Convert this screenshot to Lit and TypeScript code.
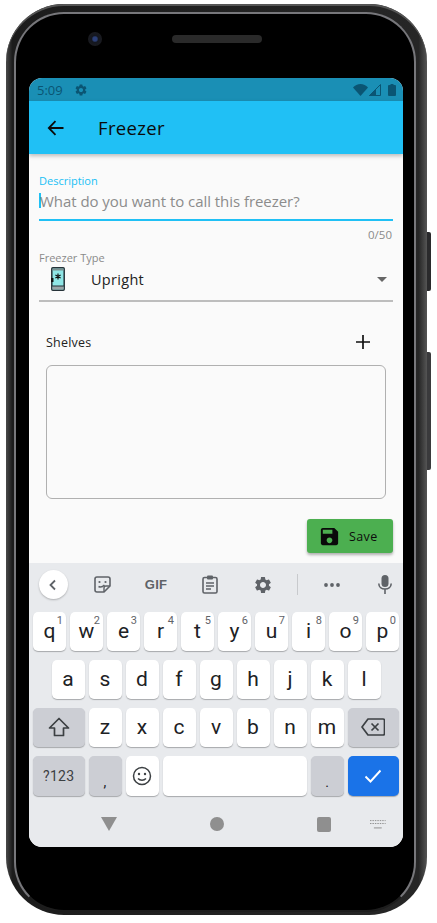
import { LitElement, html, css, svg } from "lit";
import { customElement } from "lit/decorators.js";

const GEAR = "M19.14 12.94c.04-.3.06-.61.06-.94 0-.32-.02-.64-.07-.94l2.03-1.58a.49.49 0 0 0 .12-.61l-1.92-3.32a.488.488 0 0 0-.59-.22l-2.39.96c-.5-.38-1.03-.7-1.62-.94l-.36-2.54a.484.484 0 0 0-.48-.41h-3.84c-.24 0-.43.17-.47.41l-.36 2.54c-.59.24-1.13.57-1.62.94l-2.39-.96c-.22-.08-.47 0-.59.22L2.74 8.87c-.12.21-.08.47.12.61l2.03 1.58c-.05.3-.09.63-.09.94s.02.64.07.94l-2.03 1.58a.49.49 0 0 0-.12.61l1.92 3.32c.12.22.37.29.59.22l2.39-.96c.5.38 1.03.7 1.62.94l.36 2.54c.05.24.24.41.48.41h3.84c.24 0 .44-.17.47-.41l.36-2.54c.59-.24 1.13-.56 1.62-.94l2.39.96c.22.08.47 0 .59-.22l1.92-3.32c.12-.22.07-.47-.12-.61l-2.01-1.58zM12 15.6c-1.98 0-3.6-1.62-3.6-3.6s1.62-3.6 3.6-3.6 3.6 1.62 3.6 3.6-1.62 3.6-3.6 3.6z";

const icon = (size: number, color: string, body: unknown) => html`<svg width=${size} height=${size} viewBox="0 0 24 24" fill=${color} style="display:block">${body}</svg>`;

const row1 = [["q","1"],["w","2"],["e","3"],["r","4"],["t","5"],["y","6"],["u","7"],["i","8"],["o","9"],["p","0"]];

@customElement("app-root")
export class AppRoot extends LitElement {
  static styles = css`
    :host { display: block; width: 437px; height: 923px; background: #fff; overflow: hidden; font-family: "Open Sans", "Noto Sans", sans-serif; }
    .stage { padding: 4px 0 0 6px; }
    .phone { position: relative; box-sizing: border-box; width: 421px; height: 911px; border-radius: 58px; background: linear-gradient(90deg, #4a4a4a, #1c1c1c 1.5%, #262626 98%, #555 100%); padding: 8px 11px 3px 8px; box-shadow: inset 0 2px 0 #555; }
    .btn { position: absolute; right: -4px; width: 4px; background: #2a2a2c; border-radius: 0 2px 2px 0; }
    .btn.a { top: 228px; height: 59px; }
    .btn.b { top: 348px; height: 118px; background: #3a3a3c; }
    .bezel { box-sizing: border-box; height: 100%; border-radius: 50px; background: #000; border: 2px solid #77777b; border-bottom-color: #1d1d1d; padding: 0 11px 0 13px; }
    .ear { display: flex; align-items: flex-start; height: 64px; padding: 18px 0 0 59px; box-sizing: border-box; }
    .cam { width: 14px; height: 14px; border-radius: 50%; background: radial-gradient(circle, #2b3f78 0 2px, #14171f 3.5px, #1a1b20 7px); }
    .spk { width: 90px; height: 8px; margin: 3px 0 0 70px; border-radius: 4px; background: #2a2a2a; }
    .screen { width: 374px; height: 769px; border-radius: 13px; overflow: hidden; display: flex; flex-direction: column; background: #fafafa; }
    .status { height: 23px; background: #1a8fb5; display: flex; align-items: center; padding: 0 7px 0 8px; color: #0a5573; font-size: 13px; box-sizing: border-box; flex: none; }
    .status .gear { margin-left: 11px; }
    .status .right { margin-left: auto; display: flex; align-items: center; gap: 1px; }
    .appbar { height: 53px; flex: none; background: #20c0f5; display: flex; align-items: center; padding-left: 18px; box-shadow: 0 2px 4px rgba(0,0,0,.25); position: relative; }
    .title { margin-left: 33px; font-size: 18.5px; color: #0b0b0b; letter-spacing: .35px; }
    .content { flex: 1; padding: 20px 10px 0 10px; display: flex; flex-direction: column; color: #222; }
    .lbl { font-size: 11px; line-height: 14px; color: #8a8a8a; }
    .lbl.on { color: #20c0f5; }
    .input { margin-top: 3px; padding-bottom: 8px; border-bottom: 2px solid #20c0f5; display: flex; font-size: 15px; line-height: 20px; color: #8c8c8c; letter-spacing: -.05px; }
    .caret { width: 2px; height: 15px; margin: 2px -1px 0 0; background: #20c0f5; }
    .count { margin-top: 7px; text-align: right; font-size: 11.5px; line-height: 14px; color: #8a8a8a; padding-right: 1px; }
    .t { margin-top: 9px; }
    .select { height: 28px; display: flex; align-items: center; padding: 0 6px 7px 12px; border-bottom: 2px solid #bdbdbd; box-sizing: content-box; }
    .select .val { margin-left: 26px; font-size: 14.5px; letter-spacing: .3px; color: #222; }
    .arrow { margin-left: auto; width: 0; height: 0; border: 5px solid transparent; border-top-color: #666; border-bottom: 0; }
    .shelves { margin-top: 26px; height: 28px; display: flex; align-items: center; justify-content: space-between; padding: 0 23px 0 7px; font-size: 12.5px; color: #222; letter-spacing: .2px; }
    .box { margin: 9px 7px 0; height: 134px; box-sizing: border-box; border: 1px solid #b0b0b0; border-radius: 6px; }
    .save { margin: 20px 0 0 auto; width: 86px; height: 34px; box-sizing: border-box; border-radius: 3px; background: #4caf50; box-shadow: 0 2px 3px rgba(0,0,0,.3); display: flex; align-items: center; padding-left: 11px; gap: 8px; font-size: 12.5px; color: #0c0c0c; letter-spacing: .4px; }
    .kb { height: 284px; flex: none; background: #e8eaed; display: flex; flex-direction: column; font-family: Roboto, "Liberation Sans", sans-serif; }
    .tools { height: 49px; box-sizing: border-box; padding: 0 0 6px 9.5px; flex: none; display: flex; align-items: center; color: #5f6368; overflow: hidden; }
    .back { width: 29px; height: 29px; flex: none; border-radius: 50%; background: #fff; box-shadow: 0 1px 2px rgba(0,0,0,.25); display: flex; align-items: center; justify-content: center; margin-right: 8px; }
    .cell { width: 53.7px; flex: none; display: flex; justify-content: center; align-items: center; }
    .gif { font-weight: 900; font-size: 13px; letter-spacing: .3px; font-family: "Liberation Sans", sans-serif; }
    .div { width: 1px; height: 21px; background: #c8cacd; margin: 0 7px 0 6.5px; flex: none; }
    .rows { padding: 0 4px; display: flex; flex-direction: column; gap: 9.5px; }
    .row { display: flex; gap: 4px; height: 38.5px; }
    .row.two { padding-left: 18.5px; }
    .row.four { height: 40px; }
    .k { position: relative; width: 33px; flex: none; box-sizing: border-box; background: #fff; border-radius: 5px; box-shadow: 0 1px 1px rgba(60,64,67,.38); display: flex; align-items: center; justify-content: center; font-size: 21px; color: #202124; }
    .k sup { position: absolute; top: 3px; right: 3px; font-size: 11px; line-height: 12px; color: #5f6368; }
    .k.wide { width: 51.5px; }
    .k.mod { background: #ccced4; }
    .k.space { width: 144px; }
    .k.num { font-size: 14px; letter-spacing: .3px; color: #3c4043; }
    .k.punct { font-size: 14px; align-items: flex-end; padding-bottom: 6px; }
    .k.go { background: #1a73e8; }
    .nav { flex: 1; display: flex; align-items: center; padding: 5px 17px 0 72px; }
    .tri { width: 0; height: 0; border-left: 8px solid transparent; border-right: 8px solid transparent; border-top: 14px solid #8f8f8f; }
    .dot { width: 14px; height: 14px; border-radius: 50%; background: #8f8f8f; margin-left: 93px; }
    .sq { width: 15px; height: 15px; border-radius: 2px; background: #8f8f8f; margin-left: 93px; }
    .kbd { margin-left: 39px; }
  `;

  render() {
    return html`<div class="stage"><div class="phone">
      <div class="btn a"></div><div class="btn b"></div>
      <div class="bezel">
        <div class="ear"><div class="cam"></div><div class="spk"></div></div>
        <div class="screen">
          <div class="status">
            <span>5:09</span>
            <span class="gear">${icon(14, "#0a5573", svg`<path d=${GEAR}/>`)}</span>
            <div class="right">
              <svg width="15" height="12" viewBox="0 0 15 12" style="display:block"><path d="M0 3.6C2 1.4 4.6 0 7.5 0S13 1.4 15 3.6L7.5 12z" fill="#0a5573"/></svg>
              <svg width="12" height="12" viewBox="0 0 12 12" style="display:block"><path d="M11.5 .5v11H.5z" fill="none" stroke="#0a5573"/><path d="M7 5v7H0z" fill="#0a5573"/></svg>
              <svg width="8" height="12" viewBox="0 0 8 12" style="display:block;margin-left:6px"><path d="M2.5 0h3v1H7a1 1 0 0 1 1 1v9a1 1 0 0 1-1 1H1a1 1 0 0 1-1-1V2a1 1 0 0 1 1-1h1.500z" fill="#0a5573"/></svg>
            </div>
          </div>
          <div class="appbar">
            <svg width="18" height="18" viewBox="0 0 18 18" style="display:block"><path d="M16.500 9H2M8.500 2.200 1.800 9l6.700 6.800" fill="none" stroke="#0b0b0b" stroke-width="1.800"/></svg>
            <span class="title">Freezer</span>
          </div>
          <div class="content">
            <div class="lbl on">Description</div>
            <div class="input"><span class="caret"></span><span>What do you want to call this freezer?</span></div>
            <div class="count">0/50</div>
            <div class="lbl t">Freezer Type</div>
            <div class="select">
              <svg width="14" height="24" viewBox="0 0 14 24" style="display:block"><rect x=".8" y=".8" width="12.400" height="22.400" rx="1" fill="#8fe6e6" stroke="#263238" stroke-width="1.500"/><rect x="1.500" y="1.500" width="11" height="2" fill="#7a8f90"/><rect x="1.500" y="19" width="11" height="3.500" fill="#9aa5a8"/><path d="M1 19h12" stroke="#263238"/><path d="M7 6.500v6M4.400 8l5.200 3M9.600 8l-5.200 3" stroke="#111" stroke-width="1.200"/><rect x="0" y="11" width="2.500" height="4" fill="#111"/></svg>
              <span class="val">Upright</span>
              <span class="arrow"></span>
            </div>
            <div class="shelves"><span>Shelves</span>
              <svg width="14" height="14" viewBox="0 0 14 14" style="display:block"><path d="M7 0v14M0 7h14" stroke="#111" stroke-width="1.700"/></svg>
            </div>
            <div class="box"></div>
            <div class="save">${icon(23, "#0a0a0a", svg`<path d="M17 3H5c-1.110 0-2 .9-2 2v14c0 1.100.89 2 2 2h14c1.100 0 2-.9 2-2V7l-4-4zm-5 16c-1.660 0-3-1.340-3-3s1.340-3 3-3 3 1.340 3 3-1.340 3-3 3zm3-10H5V5h10v4z"/>`)}<span>Save</span></div>
          </div>
          <div class="kb">
            <div class="tools">
              <div class="back"><svg width="12" height="12" viewBox="0 0 12 12" style="display:block"><path d="M8 1.500 3.500 6 8 10.500" fill="none" stroke="#5f6368" stroke-width="1.800"/></svg></div>
              <div class="cell"><svg width="17" height="17" viewBox="0 0 17 17" style="display:block"><path d="M3 1h11a2 2 0 0 1 2 2v7l-6 6H3a2 2 0 0 1-2-2V3a2 2 0 0 1 2-2z" fill="none" stroke="#5f6368" stroke-width="1.600"/><path d="M10 16v-4a2 2 0 0 1 2-2h4" fill="none" stroke="#5f6368" stroke-width="1.400"/><circle cx="5.500" cy="6" r="1.100" fill="#5f6368"/><circle cx="11.500" cy="6" r="1.100" fill="#5f6368"/><path d="M4.500 10.500c2 1 4 .6 6-1.500" fill="none" stroke="#5f6368" stroke-width="1.500"/></svg></div>
              <div class="cell gif">GIF</div>
              <div class="cell"><svg width="16" height="19" viewBox="0 0 16 19" style="display:block"><rect x="1" y="2.500" width="14" height="15.500" rx="1.500" fill="none" stroke="#5f6368" stroke-width="1.600"/><rect x="5" y=".5" width="6" height="4" rx="1" fill="#5f6368"/><path d="M4 8h8M4 11h8M4 14h5" stroke="#5f6368" stroke-width="1.400"/></svg></div>
              <div class="cell">${icon(20, "#5f6368", svg`<path d=${GEAR}/>`)}</div>
              <div class="div"></div>
              <div class="cell"><svg width="16" height="4" viewBox="0 0 16 4" style="display:block"><circle cx="2" cy="2" r="1.900" fill="#5f6368"/><circle cx="8" cy="2" r="1.900" fill="#5f6368"/><circle cx="14" cy="2" r="1.900" fill="#5f6368"/></svg></div>
              <div class="cell"><svg width="14" height="19" viewBox="0 0 14 19" style="display:block"><rect x="3.500" y="0" width="7" height="12" rx="3.500" fill="#5f6368"/><path d="M.8 8.500c0 3.400 2.800 5.500 6.200 5.500s6.200-2.100 6.200-5.500M7 14v5" fill="none" stroke="#5f6368" stroke-width="1.600"/></svg></div>
            </div>
            <div class="rows">
              <div class="row">${row1.map(([l, n]) => html`<div class="k">${l}<sup>${n}</sup></div>`)}</div>
              <div class="row two">${"asdfghjkl".split("").map((l) => html`<div class="k">${l}</div>`)}</div>
              <div class="row">
                <div class="k wide mod"><svg width="22" height="20" viewBox="0 0 22 20" style="display:block"><path d="M11 1.500 1.500 11H6.500v7.500h9V11h5z" fill="none" stroke="#3c4043" stroke-width="1.700" stroke-linejoin="round"/></svg></div>
                ${"zxcvbnm".split("").map((l) => html`<div class="k">${l}</div>`)}
                <div class="k wide mod"><svg width="24" height="18" viewBox="0 0 24 18" style="display:block"><path d="M7 1h15a1.500 1.500 0 0 1 1.500 1.500v13A1.500 1.500 0 0 1 22 17H7L1 9z" fill="none" stroke="#3c4043" stroke-width="1.700" stroke-linejoin="round"/><path d="M10.500 5.500l7 7M17.500 5.500l-7 7" stroke="#3c4043" stroke-width="1.700"/></svg></div>
              </div>
              <div class="row four">
                <div class="k wide mod num">?123</div>
                <div class="k mod punct">,</div>
                <div class="k"><svg width="20" height="20" viewBox="0 0 20 20" style="display:block"><circle cx="10" cy="10" r="8.500" fill="none" stroke="#3c4043" stroke-width="1.500"/><circle cx="7" cy="8" r="1.200" fill="#3c4043"/><circle cx="13" cy="8" r="1.200" fill="#3c4043"/><path d="M6 12.500c2 2.300 6 2.300 8 0" fill="none" stroke="#3c4043" stroke-width="1.400"/></svg></div>
                <div class="k space"></div>
                <div class="k mod punct">.</div>
                <div class="k wide go"><svg width="18" height="14" viewBox="0 0 18 14" style="display:block"><path d="M1.500 7.500 6.500 12.500 16.500 1.500" fill="none" stroke="#fff" stroke-width="1.900"/></svg></div>
              </div>
            </div>
            <div class="nav">
              <div class="tri"></div><div class="dot"></div><div class="sq"></div>
              <svg class="kbd" width="16" height="9" viewBox="0 0 16 9" style="display:block"><path d="M0 .5h16M0 3.500h16" stroke="#8f8f8f" stroke-dasharray="1.500 1" /><path d="M4 8h8" stroke="#8f8f8f"/></svg>
            </div>
          </div>
        </div>
      </div>
    </div></div>`;
  }
}
